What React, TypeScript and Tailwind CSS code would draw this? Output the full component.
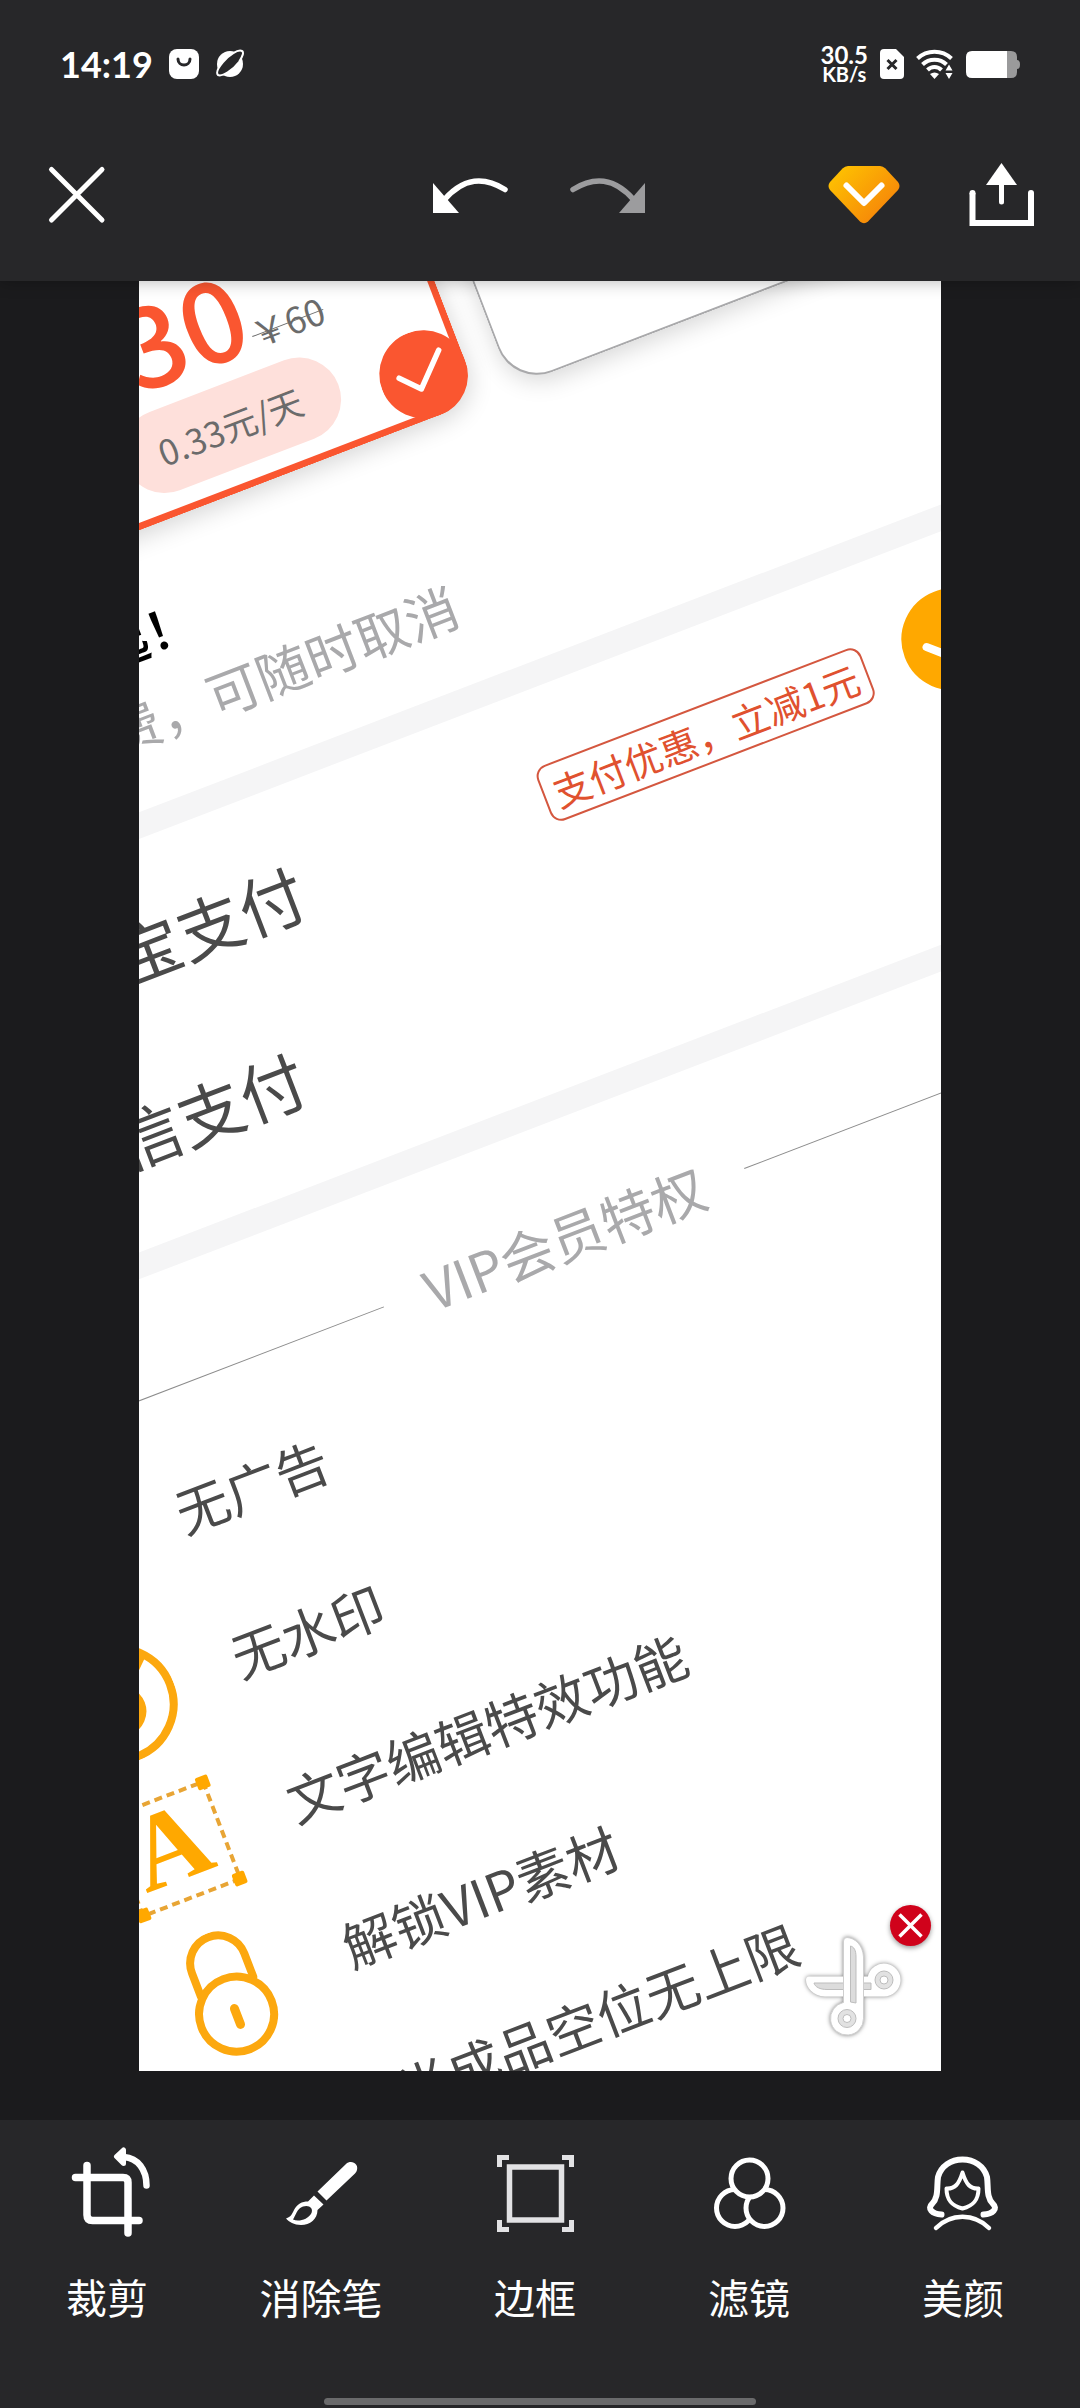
import { useState, type ReactNode } from 'react';
import { clsx } from 'clsx';

const SYMBOL = { fill: 'none', strokeLinecap: 'round', strokeLinejoin: 'round' } as const;

function StatusBar() {
  return (
    <div className="flex items-center justify-between pt-11 pr-[60px] pl-[60px]">
      <div className="flex items-center gap-4">
        <span className="font-['Lato',sans-serif] text-[36px] leading-[40px] font-bold">14:19</span>
        <svg className="h-[30px] w-[30px]" viewBox="0 0 30 30" {...SYMBOL}>
          <rect width="30" height="30" rx="8" fill="#fff" />
          <path d="M9 10C9 18 21 18 21 10" stroke="#272729" strokeWidth="3" />
        </svg>
        <svg className="h-[30px] w-[30px]" viewBox="0 0 30 30" {...SYMBOL}>
          <circle cx="15" cy="15" r="13" fill="#fff" />
          <path d="M3 26C7 28 18 21 24 13C28 7 29 3 27 2C23 0 14 6 8 13C3 19 1 24 3 26z" fill="#272729" stroke="#fff" strokeWidth="2" />
        </svg>
      </div>

      <div className="flex items-center gap-3">
        <div className="flex flex-col items-center font-['Lato',sans-serif] font-bold">
          <span className="text-[24px] leading-[20px]">30.5</span>
          <span className="text-[20px] leading-[18px]">KB/s</span>
        </div>
        <svg className="h-[30px] w-6" viewBox="0 0 24 30" {...SYMBOL}>
          <path d="M4 0H16L24 8V26Q24 30 20 30H4Q0 30 0 26V4Q0 0 4 0z" fill="#fff" />
          <path d="M7.500 11L16.500 20M16.500 11L7.500 20" stroke="#272729" strokeWidth="3" strokeLinecap="butt" />
        </svg>
        <svg className="h-[30px] w-[38px]" viewBox="0 0 38 30" fill="none" stroke="#fff" strokeWidth="4">
          <path d="M1.500 9.500C11 0.500 26 0.500 35.500 9.500" />
          <path d="M6.500 15.500C13 9 24 9 30.500 15.500" />
          <path d="M11.500 21C15.500 17 21.500 17 25.500 21" />
          <path d="M14 25Q18.500 22 23 25L18.500 30z" fill="#fff" stroke="none" />
          <path d="M33 15.500L36.500 21.500H29.500zM33 30L36.500 24H29.500z" fill="#fff" stroke="none" />
        </svg>
        <svg className="h-[27px] w-[54px]" viewBox="0 0 54 27">
          <path d="M41 0H45Q51 0 51 6V21Q51 27 45 27H41z" fill="#9a9a9b" />
          <path d="M51 9Q54 9 54 13.500T51 18z" fill="#9a9a9b" />
          <path d="M6 0H41V27H6Q0 27 0 21V6Q0 0 6 0z" fill="#fff" />
        </svg>
      </div>
    </div>
  );
}

function HistoryArrow({ flipped }: { flipped?: boolean }) {
  return (
    <svg className={clsx('h-9 w-[76px]', flipped && '-scale-x-100')} viewBox="0 0 76 36" {...SYMBOL}>
      <path d="M3 12.500C24 -0.500 44 0 64 23" stroke="currentColor" strokeWidth="5.500" />
      <path d="M75 6V36H49z" fill="currentColor" />
    </svg>
  );
}

function Toolbar() {
  return (
    <div className="flex items-center justify-between pt-[79px] pr-[44px] pb-[54px] pl-[47px]">
      <button aria-label="关闭">
        <svg className="h-[60px] w-[60px]" viewBox="0 0 60 60" {...SYMBOL}>
          <path d="M4.500 4.500L55 55M55 4.500L4.500 55" stroke="#fff" strokeWidth="5" />
        </svg>
      </button>
      <div className="flex items-center gap-[62px] pl-[142px]">
        <button aria-label="撤销">
          <HistoryArrow flipped />
        </button>
        <button aria-label="重做" className="text-[#9c9c9e]">
          <HistoryArrow />
        </button>
      </div>
      <div className="flex items-center gap-[68px]">
        <button aria-label="VIP">
          <svg className="h-[58px] w-[72px]" viewBox="0 0 72 58" {...SYMBOL}>
            <defs>
              <linearGradient id="gem" x1="0" y1="0" x2="1" y2="0.800">
                <stop offset="0" stopColor="#ffc800" />
                <stop offset="1" stopColor="#f57f0a" />
              </linearGradient>
            </defs>
            <path
              d="M20 0H52Q55 0 57.500 2.500L70 16Q73 20 70 24L40 55.500Q36 59 32 55.500L2 24Q-1 20 2 16L14.500 2.500Q17 0 20 0z"
              fill="url(#gem)"
            />
            <path d="M18.500 19.500L36 37L53.500 19.500" stroke="#fff" strokeWidth="6" />
          </svg>
        </button>
        <button aria-label="导出">
          <svg className="h-16 w-[68px]" viewBox="0 0 68 64" fill="none">
            <path d="M4.500 30V60H63V30" stroke="#fff" strokeWidth="6" />
            <circle cx="4.500" cy="30" r="3" fill="#fff" />
            <circle cx="63" cy="30" r="3" fill="#fff" />
            <path d="M33.500 18V39" stroke="#fff" strokeWidth="5" strokeLinecap="round" />
            <path d="M33.500 0L49 22H18z" fill="#fff" />
          </svg>
        </button>
      </div>
    </div>
  );
}

function PlanCards() {
  return (
    <div className="flex h-[233px] gap-[35px] pl-[380px]">
      <button className="relative h-full w-[482px] shrink-0 rounded-b-[42px] border-x-[7px] border-b-[7px] border-[#fa5630] bg-white shadow-[0_6px_24px_rgba(0,0,0,0.16)]">
        <span className="flex h-full flex-col items-center justify-end pb-4">
          <span className="flex items-baseline pl-[50px] text-[112px] leading-[72px] font-medium text-[#fa5630]">
            30
            <del className="text-[36px] font-normal text-[#6b6b6b] decoration-1">￥60</del>
          </span>
          <span className="rounded-full bg-[#fee0db] pr-10 pl-9 py-[18px] text-[35px] leading-[48px] text-[#6b6b6b]">
            0.33元/天
          </span>
        </span>
        <svg className="absolute -right-[7px] -bottom-[7px] h-[88px] w-[88px]" viewBox="0 0 88 88" {...SYMBOL}>
          <circle cx="44" cy="44" r="44" fill="#fa5630" />
          <path d="M20 39L37 57L67 27" stroke="#fff" strokeWidth="5.500" />
        </svg>
      </button>
      <button
        aria-label="其他套餐"
        className="h-full w-[482px] shrink-0 rounded-b-[42px] border-x-2 border-b-2 border-[#a9a9ab] bg-white shadow-[0_6px_24px_rgba(0,0,0,0.16)]"
      />
    </div>
  );
}

function PaymentRow({ id, label, tag, checked, onSelect }: {
  id: string;
  label: string;
  tag?: string;
  checked: boolean;
  onSelect: (id: string) => void;
}) {
  return (
    <div className="flex h-[174px] items-center justify-between pr-3 pl-[190px]">
      <label htmlFor={id} className="pb-1 text-[66px] leading-[80px] text-[#4a4a4a]">{label}</label>
      <div className="flex items-center gap-10">
        {tag && (
          <span className="rounded-xl border-2 border-[#d4573f] px-[9px] text-[38px] leading-[55px] text-[#e0512f]">
            {tag}
          </span>
        )}
        <span className="grid h-[102px] w-[102px] place-items-center">
          <input
            id={id}
            type="radio"
            name="payment"
            checked={checked}
            onChange={() => onSelect(id)}
            className="col-start-1 row-start-1 h-[102px] w-[102px] appearance-none rounded-full border-4 border-[#d0d0d0] checked:border-[#ffa800] checked:bg-[#ffa800]"
          />
          {checked && (
            <svg className="pointer-events-none col-start-1 row-start-1 h-[102px] w-[102px]" viewBox="0 0 102 102" {...SYMBOL}>
              <path d="M24 49L43 66L76 34" stroke="#fff" strokeWidth="8" />
            </svg>
          )}
        </span>
      </div>
    </div>
  );
}

function NoWatermarkIcon() {
  return (
    <svg className="h-[120px] w-[120px] shrink-0" viewBox="0 0 120 120" {...SYMBOL} stroke="#fca80f" strokeWidth="8">
      <circle cx="60" cy="60" r="56" />
      <path d="M100 23L79 43M44 78L20 98" />
      <path d="M60 30C50 44 40 56 40 68A21 21 0 0 0 82 68C82 56 70 44 60 30z" />
    </svg>
  );
}

function TextEffectIcon() {
  return (
    <svg className="h-[120px] w-[120px] shrink-0" viewBox="0 0 120 120" fill="#ffa800">
      <rect x="8" y="8" width="104" height="104" fill="none" stroke="#e8a535" strokeWidth="4" strokeDasharray="8 5" />
      <rect x="2" y="2" width="13" height="13" rx="2" />
      <rect x="105" y="2" width="13" height="13" rx="2" />
      <rect x="2" y="105" width="13" height="13" rx="2" />
      <rect x="105" y="105" width="13" height="13" rx="2" />
      <text x="58" y="92" textAnchor="middle" className="font-['Liberation_Serif',serif] text-[108px] font-bold">A</text>
    </svg>
  );
}

function LockIcon() {
  return (
    <svg className="h-[128px] w-[90px] shrink-0" viewBox="0 0 90 128" {...SYMBOL} stroke="#fca80f" strokeWidth="8">
      <path d="M18 57V32A28 28 0 0 1 74 32V57" />
      <circle cx="45" cy="86" r="37.500" />
      <path d="M45 80V97" strokeWidth="9" />
    </svg>
  );
}

const benefits: { label: string; icon?: ReactNode }[] = [
  { label: '无广告' },
  { label: '无水印', icon: <NoWatermarkIcon /> },
  { label: '文字编辑特效功能', icon: <TextEffectIcon /> },
  { label: '解锁VIP素材', icon: <LockIcon /> },
  { label: '半成品空位无上限' },
];

// The photo being edited: a membership page, turned around the canvas' top left corner
function Photo() {
  const [payment, setPayment] = useState('alipay');

  return (
    <div className="absolute top-0 -left-[586px] w-[1280px] origin-[586px_0] -rotate-[21deg]">
      <PlanCards />
      <div className="pt-[57px] pb-[42px] pl-[236px] leading-[82px] whitespace-nowrap">
        <p className="pl-[178px] text-[52px] font-medium text-black">起！</p>
        <p className="text-[53px] text-[#a9a9ab]">自动续费，可随时取消</p>
      </div>
      <div className="h-[25px] bg-[#f5f5f6]" />
      <div className="pt-[18px] pb-5">
        <PaymentRow
          id="alipay"
          label="支付宝支付"
          tag="支付优惠，立减1元"
          checked={payment === 'alipay'}
          onSelect={setPayment}
        />
        <PaymentRow id="wechat" label="微信支付" checked={payment === 'wechat'} onSelect={setPayment} />
      </div>
      <div className="h-[25px] bg-[#f5f5f6]" />
      <div className="flex items-center gap-11 pt-[68px]">
        <span className="h-px flex-1 bg-[#8c8c8c]" />
        <h2 className="text-[54px] leading-[90px] text-[#a9a9ab]">VIP会员特权</h2>
        <span className="h-px flex-1 bg-[#8c8c8c]" />
      </div>
      <ul>
        {benefits.map(b => (
          <li key={b.label} className="flex h-[155px] items-center gap-[68px] pb-1">
            <span className="flex w-[112px] justify-center">{b.icon}</span>
            <span className="pb-1 text-[53px] leading-[80px] text-[#4a4a4a]">{b.label}</span>
          </li>
        ))}
      </ul>
    </div>
  );
}

function Watermark() {
  return (
    <div className="absolute right-[10px] bottom-[34px] flex items-start">
      <svg className="-mr-[15px] mt-8 h-[100px] w-[100px] overflow-visible drop-shadow-[0_0_2px_rgba(0,0,0,0.5)]" viewBox="0 0 100 100">
        <path d="M4 39.500H62.900A16.500 16.500 0 1 1 79 59.500H20C8 59 1 50 1 43Q1 39.500 4 39.500z" fill="#fff" />
        <path d="M9 46H66V52.500H22C15 52.500 10 50 9 46z" fill="#dcdcdc" stroke="#bdbdbd" />
        <path d="M38.500 4V65.400A16.500 16.500 0 1 0 58.500 81.500V20C58 8 50 1 42 0.500Q38.500 0.500 38.500 4z" fill="#fff" stroke="#cfcfcf" />
        <path d="M45.500 9V65L51 66V20C51 13 49 10 45.500 9z" fill="#dcdcdc" stroke="#bdbdbd" />
        <g fill="#e2e2e2" stroke="#bdbdbd">
          <circle cx="79" cy="43" r="9" />
          <circle cx="42" cy="81.500" r="9" />
          <circle cx="79" cy="43" r="4" fill="#fff" />
          <circle cx="42" cy="81.500" r="4" fill="#fff" />
        </g>
      </svg>
      <button aria-label="移除水印" className="h-[41px] w-[41px] rounded-full bg-[#d0021b] shadow-[0_2px_5px_rgba(0,0,0,0.4)]">
        <svg viewBox="0 0 41 41">
          <path d="M9.500 9.500L31.500 31.500M31.500 9.500L9.500 31.500" stroke="#fff" strokeWidth="3.500" />
        </svg>
      </button>
    </div>
  );
}

function CropIcon() {
  return (
    <svg className="h-[90px] w-[90px]" viewBox="0 0 90 90" {...SYMBOL} stroke="#fff" strokeWidth="7.500">
      <path d="M25 18.500V68Q25 73.500 30.500 73.500H77" />
      <path d="M13.500 30.500H61Q66 30.500 66 35.500V86" />
      <path d="M84.500 38.500C84.500 23 76 11 62 10" strokeWidth="6.500" />
      <path d="M54.500 9.500L61.500 3V16.500z" fill="#fff" strokeWidth="5" />
    </svg>
  );
}

function BrushIcon() {
  return (
    <svg className="h-[90px] w-[90px]" viewBox="0 0 90 90" fill="#fff">
      <path d="M41.500 44.500L70 17C73 14 78 14.500 80 17.500C82 20 81.500 24 79 26.500L50.500 53.500z" />
      <path
        fillRule="evenodd"
        d="M38 48.500L47.500 57.500L41.500 63C41.500 72 34 78 25 78C18 78 13 75 10 71.500C15 70 16 67 18 63C21 57 26 54.500 32 54.500zM27 59.500C21 61.500 20 68 17 72.500C22 75 32 73 35.500 66C37.500 61 33 57.500 27 59.500z"
      />
    </svg>
  );
}

function FrameIcon() {
  return (
    <svg className="h-[90px] w-[90px]" viewBox="0 0 90 90" fill="none" stroke="#e2e2e4" strokeWidth="5">
      <rect x="19.500" y="20" width="52" height="53" strokeWidth="5.500" />
      <path d="M9.500 20V10.500H19M72 10.500H81.500V20M81.500 73V82.500H72M19 82.500H9.500V73" />
    </svg>
  );
}

function FilterIcon() {
  return (
    <svg className="h-[90px] w-[90px]" viewBox="0 0 90 90" fill="#272729" stroke="#fff" strokeWidth="5">
      <circle cx="31" cy="61" r="18.500" />
      <circle cx="60.500" cy="61" r="18.500" />
      <circle cx="45.500" cy="31.500" r="18.500" />
    </svg>
  );
}

function BeautyIcon() {
  return (
    <svg className="h-[90px] w-[90px]" viewBox="0 0 90 90" {...SYMBOL} stroke="#fff" strokeWidth="6">
      <path d="M23.500 67.500C14 67 9 61.500 14 57C21 50 18.500 40 20 30C23 19 33 12.500 44.500 12.500C56 12.500 66 19 69 30C70.500 40 68 50 75 57C80 61.500 75 67 65.500 67.500" />
      <path d="M28.500 41.500C37 42 41 37 44.500 25.500C48 37 52 42 60.500 41.500C60.500 54 54.500 59 44.500 61.500C34.500 59 28.500 54 28.500 41.500z" strokeWidth="4" />
      <path d="M18 81C33 66 56 66 71 81" strokeWidth="4.500" />
    </svg>
  );
}

const tools = [
  { label: '裁剪', icon: <CropIcon /> },
  { label: '消除笔', icon: <BrushIcon /> },
  { label: '边框', icon: <FrameIcon /> },
  { label: '滤镜', icon: <FilterIcon /> },
  { label: '美颜', icon: <BeautyIcon /> },
];

export default function App() {
  return (
    <div className="flex min-h-screen flex-col bg-[#1b1b1d] font-['Noto_Sans_CJK_SC',sans-serif] text-white">
      <header className="relative z-10 bg-[#272729] shadow-[0_0_16px_rgba(0,0,0,0.3)]">
        <StatusBar />
        <Toolbar />
      </header>

      <main className="flex-1 px-[139px] pb-[49px]">
        <div className="relative aspect-[802/1790] w-full overflow-hidden bg-white">
          <Photo />
          <Watermark />
        </div>
      </main>

      <footer className="bg-[#272729] pt-[27px] pb-[3px]">
        <nav className="flex pr-[10px]">
          {tools.map(tool => (
            <button key={tool.label} className="flex flex-1 flex-col items-center gap-[30px]">
              {tool.icon}
              <span className="text-[41px] leading-[58px]">{tool.label}</span>
            </button>
          ))}
        </nav>
        <div className="mx-auto mt-[73px] h-[7px] w-2/5 rounded-full bg-[#6a6a6b]" />
      </footer>
    </div>
  );
}
